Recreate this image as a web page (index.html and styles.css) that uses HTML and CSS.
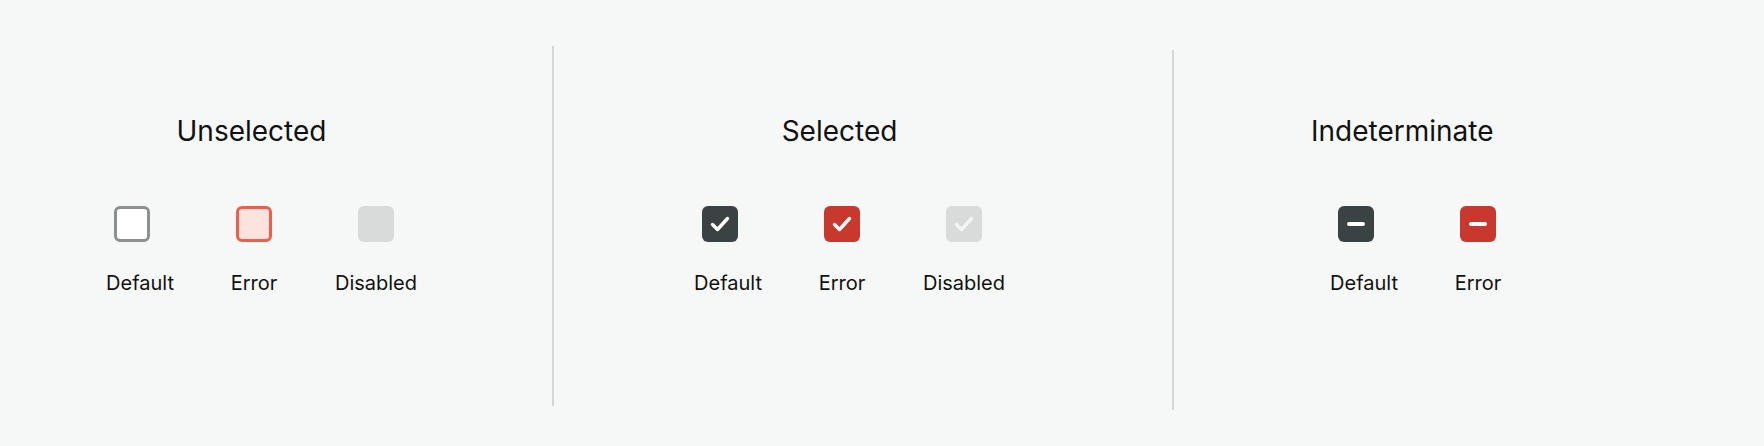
FILE: index.html
```
<!DOCTYPE html>
<html lang="en">
<head>
    <meta charset="UTF-8">
    <title>Checkbox States</title>
    <meta name="viewport" content="width=device-width, initial-scale=1">
    <link rel="stylesheet" href="styles.css">
</head>
<body>
    <div class="board">
        <!-- Unselected -->
        <div class="section section-unselected">
            <h2 class="title">Unselected</h2>
            <div class="options">
                <div class="option">
                    <span class="box box-default"></span>
                    <span class="label label-first">Default</span>
                </div>
                <div class="option">
                    <span class="box box-error"></span>
                    <span class="label">Error</span>
                </div>
                <div class="option">
                    <span class="box box-disabled"></span>
                    <span class="label">Disabled</span>
                </div>
            </div>
        </div>

        <div class="divider divider-first"></div>

        <!-- Selected -->
        <div class="section section-selected">
            <h2 class="title">Selected</h2>
            <div class="options">
                <div class="option">
                    <span class="box box-checked">
                        <svg viewBox="0 0 36 36" width="36" height="36"><path d="M10.5 18.5 L15.5 23.5 L25.5 12.5" /></svg>
                    </span>
                    <span class="label label-first">Default</span>
                </div>
                <div class="option">
                    <span class="box box-checked-error">
                        <svg viewBox="0 0 36 36" width="36" height="36"><path d="M10.5 18.5 L15.5 23.5 L25.5 12.5" /></svg>
                    </span>
                    <span class="label">Error</span>
                </div>
                <div class="option">
                    <span class="box box-checked-disabled">
                        <svg viewBox="0 0 36 36" width="36" height="36"><path d="M10.5 18.5 L15.5 23.5 L25.5 12.5" /></svg>
                    </span>
                    <span class="label">Disabled</span>
                </div>
            </div>
        </div>

        <div class="divider divider-second"></div>

        <!-- Indeterminate -->
        <div class="section section-indeterminate">
            <h2 class="title">Indeterminate</h2>
            <div class="options">
                <div class="option">
                    <span class="box box-checked"><span class="dash"></span></span>
                    <span class="label label-first">Default</span>
                </div>
                <div class="option">
                    <span class="box box-checked-error"><span class="dash"></span></span>
                    <span class="label">Error</span>
                </div>
            </div>
        </div>
    </div>
</body>
</html>
```

FILE: styles.css
```
/* Base */
* {
    box-sizing: border-box;
    margin: 0;
    padding: 0;
}
body {
    font-family: 'Inter', 'Noto Sans', sans-serif;
    background-color: #f6f8f7;
    color: #111;
    width: 1764px;
    height: 446px;
    overflow: hidden;
}
/* Layout */
.board {
    display: flex;
    height: 446px;
}
.section {
    display: flex;
    flex-direction: column;
    align-items: center;
    padding-top: 114px;
}
.section-unselected {
    width: 552px;
    padding-right: 44px;
}
.section-selected {
    width: 618px;
    padding-right: 42px;
}
.section-unselected .title,
.section-selected .title {
    margin-right: 5px;
}
.section-indeterminate {
    width: 590px;
    align-items: flex-start;
    padding-left: 121px;
}
.section-indeterminate .title {
    margin-left: 16px;
}
.divider {
    width: 2px;
    height: 360px;
    background-color: #d5d7d6;
}
.divider-first {
    margin-top: 46px;
}
.divider-second {
    margin-top: 50px;
}
/* Title */
.title {
    font-size: 28px;
    font-weight: 400;
    line-height: 34px;
    color: #111;
}
/* Options */
.options {
    display: flex;
    margin-top: 58px;
}
.option {
    width: 122px;
    display: flex;
    flex-direction: column;
    align-items: center;
}
.label {
    margin-top: 29px;
    font-size: 20px;
    line-height: 24px;
    color: #111;
}
.label-first {
    padding-left: 16px;
}
/* Checkbox boxes */
.box {
    width: 36px;
    height: 36px;
    border-radius: 6px;
    display: flex;
    align-items: center;
    justify-content: center;
}
.box svg {
    fill: none;
    stroke: #fff;
    stroke-width: 3.4;
    stroke-linecap: round;
    stroke-linejoin: round;
}
.box-default {
    background-color: #fff;
    border: 3.5px solid #8a9190;
}
.box-error {
    background-color: #fde3de;
    border: 3.5px solid #f25c4b;
}
.box-disabled {
    background-color: #d9dbda;
}
.box-checked {
    background-color: #3b4243;
}
.box-checked-error {
    background-color: #c9382d;
}
.box-checked-disabled {
    background-color: #d9dbda;
}
.box-checked-disabled svg {
    stroke: #f3f4f4;
}
.dash {
    width: 18px;
    height: 4px;
    border-radius: 2px;
    background-color: #fff;
}
```
